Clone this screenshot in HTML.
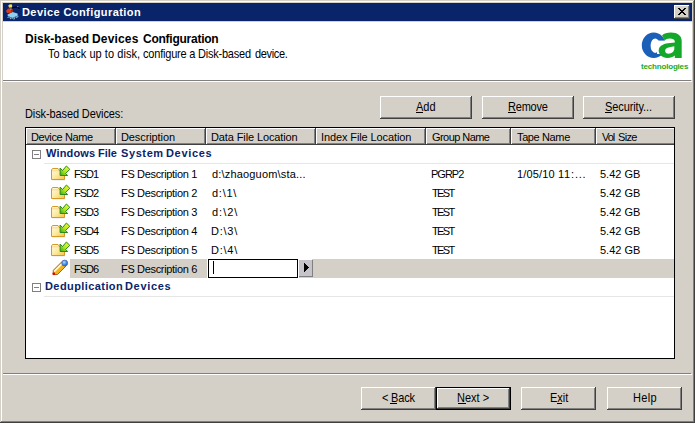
<!DOCTYPE html>
<html><head><meta charset="utf-8"><style>
html,body{margin:0;padding:0;width:695px;height:424px;overflow:hidden;background:#fff}
body{position:relative;font-family:"Liberation Sans",sans-serif}
.t{position:absolute;white-space:nowrap;}
u{text-decoration:underline;text-underline-offset:1px}
</style></head><body>
<div style="position:absolute;left:0px;top:0px;width:695px;height:424px;background:#fff;"></div>
<div style="position:absolute;left:0px;top:0px;width:695px;height:423px;background:#404040;"></div>
<div style="position:absolute;left:0px;top:0px;width:694px;height:422px;background:#d4d0c8;"></div>
<div style="position:absolute;left:1px;top:1px;width:693px;height:421px;background:#808080;"></div>
<div style="position:absolute;left:1px;top:1px;width:692px;height:420px;background:#fff;"></div>
<div style="position:absolute;left:2px;top:2px;width:691px;height:419px;background:#d4d0c8;"></div>
<div style="position:absolute;left:3px;top:3px;width:689px;height:18px;background:#0a246a;"></div>
<svg style="position:absolute;left:3px;top:3px" width="18" height="18" viewBox="0 0 18 18">
<polygon points="4.5,11.5 9.5,9 14.5,10.5 14.8,12.5 9.5,15 4.8,13" fill="#8ed0ee"/>
<polygon points="4.8,13 9.5,15 14.8,12.5 14.6,13.6 9.5,16 5,14" fill="#4a9cc8"/>
<path d="M4.5,14 L5.5,15 M6.8,15.2 L8,16 M10.5,16.2 L12,15.5 M13.2,14.8 L15.5,13.2" stroke="#b8bcc8" stroke-width="1"/>
<polygon points="3,8 5,5.5 9.5,5.8 10.3,8.5 8,9.8 4,10" fill="#e83a12"/>
<polygon points="7.5,6 9.5,5.8 10.3,8.5 8.5,9.5" fill="#a02808"/>
<polygon points="5.2,2.5 7,1.2 9,1.5 9.2,3.5 8,4.8 6,4.5" fill="#f2e040"/>
<polygon points="6.8,4 8.6,3.8 8.8,6.2 7.4,6.4" fill="#fff"/>
<path d="M7.8,4.2 L8,6.2" stroke="#000" stroke-width="0.9"/>
<path d="M8.5,5.2 L12,4 L14.5,4.2 L16.5,5.6" stroke="#000" stroke-width="1.1" fill="none"/>
<path d="M14.5,4.2 L15,3" stroke="#c0c0c0" stroke-width="0.8"/>
</svg>
<div class="t" style="left:22.00px;top:6.69px;font-size:11px;line-height:11px;font-weight:700;color:#fff;letter-spacing:0.421px">Device Configuration</div>
<div style="position:absolute;left:674px;top:5px;width:16px;height:14px;background:#404040;"></div>
<div style="position:absolute;left:674px;top:5px;width:15px;height:13px;background:#fff;"></div>
<div style="position:absolute;left:675px;top:6px;width:14px;height:12px;background:#808080;"></div>
<div style="position:absolute;left:675px;top:6px;width:13px;height:11px;background:#d4d0c8;"></div>
<svg style="position:absolute;left:678px;top:8px" width="8" height="7" viewBox="0 0 8 7" shape-rendering="crispEdges"><rect x="0" y="0" width="1" height="1"/><rect x="1" y="0" width="1" height="1"/><rect x="6" y="0" width="1" height="1"/><rect x="7" y="0" width="1" height="1"/><rect x="1" y="1" width="1" height="1"/><rect x="2" y="1" width="1" height="1"/><rect x="5" y="1" width="1" height="1"/><rect x="6" y="1" width="1" height="1"/><rect x="2" y="2" width="1" height="1"/><rect x="3" y="2" width="1" height="1"/><rect x="4" y="2" width="1" height="1"/><rect x="5" y="2" width="1" height="1"/><rect x="3" y="3" width="1" height="1"/><rect x="4" y="3" width="1" height="1"/><rect x="2" y="4" width="1" height="1"/><rect x="3" y="4" width="1" height="1"/><rect x="4" y="4" width="1" height="1"/><rect x="5" y="4" width="1" height="1"/><rect x="1" y="5" width="1" height="1"/><rect x="2" y="5" width="1" height="1"/><rect x="5" y="5" width="1" height="1"/><rect x="6" y="5" width="1" height="1"/><rect x="0" y="6" width="1" height="1"/><rect x="1" y="6" width="1" height="1"/><rect x="6" y="6" width="1" height="1"/><rect x="7" y="6" width="1" height="1"/></svg>
<div style="position:absolute;left:3px;top:22px;width:689px;height:58px;background:#fff;"></div>
<div style="position:absolute;left:3px;top:80px;width:688px;height:1px;background:#808080;"></div>
<div style="position:absolute;left:3px;top:81px;width:689px;height:1px;background:#fff;"></div>
<div class="t" style="left:25.00px;top:32.84px;font-size:12px;line-height:12px;font-weight:700;color:#000;letter-spacing:0.000px">Disk-based</div>
<div class="t" style="left:92.00px;top:32.84px;font-size:12px;line-height:12px;font-weight:700;color:#000;letter-spacing:0.167px">Devices</div>
<div class="t" style="left:143.00px;top:32.84px;font-size:12px;line-height:12px;font-weight:700;color:#000;letter-spacing:-0.250px">Configuration</div>
<div class="t" style="left:48.00px;top:48.69px;font-size:11px;line-height:11px;font-weight:400;color:#000;letter-spacing:0.056px;transform:scaleY(1.16);transform-origin:0 9.31px">To back up to disk,</div>
<div class="t" style="left:143.00px;top:48.69px;font-size:11px;line-height:11px;font-weight:400;color:#000;letter-spacing:-0.200px;transform:scaleY(1.16);transform-origin:0 9.31px">configure a</div>
<div class="t" style="left:198.00px;top:48.69px;font-size:11px;line-height:11px;font-weight:400;color:#000;letter-spacing:-0.222px;transform:scaleY(1.16);transform-origin:0 9.31px">Disk-based</div>
<div class="t" style="left:255.00px;top:48.69px;font-size:11px;line-height:11px;font-weight:400;color:#000;letter-spacing:-0.333px;transform:scaleY(1.16);transform-origin:0 9.31px">device.</div>
<svg style="position:absolute;left:640px;top:30px" width="50" height="44" viewBox="0 0 50 44">
<path fill-rule="evenodd" fill="#1a5fb8" d="M13.7,2.5 A11.9,12.7 0 1 0 13.7,27.9 A11.9,12.7 0 1 0 13.7,2.5 Z M15.2,8.45 A4.6,7.25 0 1 1 15.2,22.95 A4.6,7.25 0 1 1 15.2,8.45 Z"/>
<polygon points="17,10.6 30,10.6 30,24 17,24" fill="#fff"/>
<path fill="#14a82a" d="M22,5.5 C24,3.3 27,2.5 31,2.5 C37.5,2.5 41.7,5.5 41.7,11 L41.7,27.9 L34.8,27.9 L34.8,25.6 C33.2,27.2 30.5,27.9 27.5,27.9 C22,27.9 18.7,24.5 18.7,20.5 C18.7,16 23,13.8 28,13.2 L34.8,12.4 L34.8,11.5 C34.8,9.6 32.6,8.4 29.7,8.4 C27.5,8.4 25.6,9.3 24.7,10.6 Z M34.3,16.3 L29.5,17.2 C26.8,17.8 25.1,18.8 25.1,20.7 C25.1,22.6 26.5,23.7 28.6,23.7 C31.8,23.7 34.3,21.5 34.3,18.5 Z"/>
</svg>
<div class="t" style="left:641.00px;top:63.23px;font-size:8px;line-height:8px;font-weight:700;color:#22aa22;letter-spacing:-0.182px">technologies</div>
<div class="t" style="left:25.00px;top:108.69px;font-size:11px;line-height:11px;font-weight:400;color:#000;letter-spacing:-0.111px;transform:scaleY(1.16);transform-origin:0 9.31px">Disk-based Devices:</div>
<div style="position:absolute;left:380px;top:96px;width:92px;height:23px;background:#404040;"></div>
<div style="position:absolute;left:380px;top:96px;width:91px;height:22px;background:#fff;"></div>
<div style="position:absolute;left:381px;top:97px;width:90px;height:21px;background:#808080;"></div>
<div style="position:absolute;left:381px;top:97px;width:89px;height:20px;background:#d4d0c8;"></div>
<div class="t" style="left:416.00px;top:101.69px;font-size:11px;line-height:11px;font-weight:400;color:#000;letter-spacing:0.000px;transform:scaleY(1.16);transform-origin:0 9.31px">Add</div>
<div style="position:absolute;left:482px;top:96px;width:92px;height:23px;background:#404040;"></div>
<div style="position:absolute;left:482px;top:96px;width:91px;height:22px;background:#fff;"></div>
<div style="position:absolute;left:483px;top:97px;width:90px;height:21px;background:#808080;"></div>
<div style="position:absolute;left:483px;top:97px;width:89px;height:20px;background:#d4d0c8;"></div>
<div class="t" style="left:508.00px;top:101.69px;font-size:11px;line-height:11px;font-weight:400;color:#000;letter-spacing:-0.200px;transform:scaleY(1.16);transform-origin:0 9.31px">Remove</div>
<div style="position:absolute;left:583px;top:96px;width:92px;height:23px;background:#404040;"></div>
<div style="position:absolute;left:583px;top:96px;width:91px;height:22px;background:#fff;"></div>
<div style="position:absolute;left:584px;top:97px;width:90px;height:21px;background:#808080;"></div>
<div style="position:absolute;left:584px;top:97px;width:89px;height:20px;background:#d4d0c8;"></div>
<div class="t" style="left:605.00px;top:101.69px;font-size:11px;line-height:11px;font-weight:400;color:#000;letter-spacing:-0.100px;transform:scaleY(1.16);transform-origin:0 9.31px">Security...</div>
<div style="position:absolute;left:25px;top:127px;width:650px;height:232px;background:#000;"></div>
<div style="position:absolute;left:26px;top:128px;width:648px;height:230px;background:#fff;"></div>
<div style="position:absolute;left:26px;top:128px;width:90px;height:17px;background:#404040;"></div>
<div style="position:absolute;left:26px;top:128px;width:89px;height:16px;background:#fff;"></div>
<div style="position:absolute;left:27px;top:129px;width:88px;height:15px;background:#808080;"></div>
<div style="position:absolute;left:27px;top:129px;width:87px;height:14px;background:#d4d0c8;"></div>
<div class="t" style="left:31.00px;top:131.69px;font-size:11px;line-height:11px;font-weight:400;color:#000;letter-spacing:-0.400px">Device Name</div>
<div style="position:absolute;left:116px;top:128px;width:90px;height:17px;background:#404040;"></div>
<div style="position:absolute;left:116px;top:128px;width:89px;height:16px;background:#fff;"></div>
<div style="position:absolute;left:117px;top:129px;width:88px;height:15px;background:#808080;"></div>
<div style="position:absolute;left:117px;top:129px;width:87px;height:14px;background:#d4d0c8;"></div>
<div class="t" style="left:121.00px;top:131.69px;font-size:11px;line-height:11px;font-weight:400;color:#000;letter-spacing:-0.100px">Description</div>
<div style="position:absolute;left:206px;top:128px;width:110px;height:17px;background:#404040;"></div>
<div style="position:absolute;left:206px;top:128px;width:109px;height:16px;background:#fff;"></div>
<div style="position:absolute;left:207px;top:129px;width:108px;height:15px;background:#808080;"></div>
<div style="position:absolute;left:207px;top:129px;width:107px;height:14px;background:#d4d0c8;"></div>
<div class="t" style="left:211.00px;top:131.69px;font-size:11px;line-height:11px;font-weight:400;color:#000;letter-spacing:-0.118px">Data File Location</div>
<div style="position:absolute;left:316px;top:128px;width:110px;height:17px;background:#404040;"></div>
<div style="position:absolute;left:316px;top:128px;width:109px;height:16px;background:#fff;"></div>
<div style="position:absolute;left:317px;top:129px;width:108px;height:15px;background:#808080;"></div>
<div style="position:absolute;left:317px;top:129px;width:107px;height:14px;background:#d4d0c8;"></div>
<div class="t" style="left:321.00px;top:131.69px;font-size:11px;line-height:11px;font-weight:400;color:#000;letter-spacing:-0.111px">Index File Location</div>
<div style="position:absolute;left:426px;top:128px;width:85px;height:17px;background:#404040;"></div>
<div style="position:absolute;left:426px;top:128px;width:84px;height:16px;background:#fff;"></div>
<div style="position:absolute;left:427px;top:129px;width:83px;height:15px;background:#808080;"></div>
<div style="position:absolute;left:427px;top:129px;width:82px;height:14px;background:#d4d0c8;"></div>
<div class="t" style="left:432.00px;top:131.69px;font-size:11px;line-height:11px;font-weight:400;color:#000;letter-spacing:-0.556px">Group Name</div>
<div style="position:absolute;left:511px;top:128px;width:85px;height:17px;background:#404040;"></div>
<div style="position:absolute;left:511px;top:128px;width:84px;height:16px;background:#fff;"></div>
<div style="position:absolute;left:512px;top:129px;width:83px;height:15px;background:#808080;"></div>
<div style="position:absolute;left:512px;top:129px;width:82px;height:14px;background:#d4d0c8;"></div>
<div class="t" style="left:517.00px;top:131.69px;font-size:11px;line-height:11px;font-weight:400;color:#000;letter-spacing:-0.375px">Tape Name</div>
<div style="position:absolute;left:596px;top:128px;width:80px;height:17px;background:#404040;"></div>
<div style="position:absolute;left:596px;top:128px;width:79px;height:16px;background:#fff;"></div>
<div style="position:absolute;left:597px;top:129px;width:78px;height:15px;background:#808080;"></div>
<div style="position:absolute;left:597px;top:129px;width:77px;height:14px;background:#d4d0c8;"></div>
<div class="t" style="left:602.00px;top:131.69px;font-size:11px;line-height:11px;font-weight:400;color:#000;letter-spacing:-1.000px">Vol</div>
<div class="t" style="left:618.00px;top:131.69px;font-size:11px;line-height:11px;font-weight:400;color:#000;letter-spacing:-0.667px">Size</div>
<div style="position:absolute;left:674px;top:127px;width:1px;height:232px;background:#000;"></div>
<div style="position:absolute;left:675px;top:128px;width:2px;height:18px;background:#d4d0c8;"></div>
<div style="position:absolute;left:32px;top:150px;width:9px;height:9px;background:#808080;"></div>
<div style="position:absolute;left:33px;top:151px;width:7px;height:7px;background:#fff;"></div>
<div style="position:absolute;left:34px;top:154px;width:5px;height:1px;background:#808080;"></div>
<div class="t" style="left:46.00px;top:147.69px;font-size:11px;line-height:11px;font-weight:700;color:#0a246a;letter-spacing:0.167px">Windows</div>
<div class="t" style="left:98.00px;top:147.69px;font-size:11px;line-height:11px;font-weight:700;color:#0a246a;letter-spacing:0.000px">File</div>
<div class="t" style="left:121.00px;top:147.69px;font-size:11px;line-height:11px;font-weight:700;color:#0a246a;letter-spacing:0.600px">System</div>
<div class="t" style="left:166.00px;top:147.69px;font-size:11px;line-height:11px;font-weight:700;color:#0a246a;letter-spacing:0.667px">Devices</div>
<div style="position:absolute;left:44px;top:163px;width:630px;height:1px;background:#e6e6e6;"></div>
<svg style="position:absolute;left:49px;top:164px" width="24" height="18" viewBox="0 0 24 18">
<defs><linearGradient id="fg0" x1="0" y1="0" x2="1" y2="1"><stop offset="0" stop-color="#fffce8"/><stop offset="0.55" stop-color="#fde89a"/><stop offset="1" stop-color="#f3c440"/></linearGradient>
<linearGradient id="ag0" x1="1" y1="0" x2="0" y2="1"><stop offset="0" stop-color="#f4ff3a"/><stop offset="0.55" stop-color="#b4e61e"/><stop offset="1" stop-color="#2ea818"/></linearGradient></defs>
<path d="M3,16.5 L16,16.5 L16,8 Z" fill="#e4e6ee"/>
<path d="M2.5,15.5 L2.5,6 L3.5,4.5 L9,4.5 L10.5,6.5 L15.5,6.5 L15.5,15.5 Z" fill="url(#fg0)" stroke="#d49a28" stroke-width="1"/>
<path d="M3,6.8 L10,6.8" stroke="#f0d080" stroke-width="0.8"/>
<path d="M11.1,4 L13.5,6.5 L17.4,2 L20.8,5.3 L16.5,9.5 L18.7,11.5 L11.1,11.5 Z" fill="url(#ag0)" stroke="#2a8a1c" stroke-width="1" stroke-linejoin="miter"/>
</svg>
<div class="t" style="left:74.00px;top:168.69px;font-size:11px;line-height:11px;font-weight:400;color:#000;letter-spacing:-1.000px">FSD1</div>
<div class="t" style="left:121.00px;top:168.69px;font-size:11px;line-height:11px;font-weight:400;color:#000;letter-spacing:-0.333px">FS Description 1</div>
<div class="t" style="left:212.00px;top:168.69px;font-size:11px;line-height:11px;font-weight:400;color:#000;letter-spacing:0.176px">d:\zhaoguom\sta...</div>
<div class="t" style="left:431.00px;top:168.69px;font-size:11px;line-height:11px;font-weight:400;color:#000;letter-spacing:-1.000px">PGRP2</div>
<div class="t" style="left:517.00px;top:168.69px;font-size:11px;line-height:11px;font-weight:400;color:#000;letter-spacing:0.167px">1/05/10</div>
<div class="t" style="left:558.00px;top:168.69px;font-size:11px;line-height:11px;font-weight:400;color:#000;letter-spacing:0.800px">11:...</div>
<div class="t" style="left:600.00px;top:168.69px;font-size:11px;line-height:11px;font-weight:400;color:#000;letter-spacing:0.000px">5.42 GB</div>
<svg style="position:absolute;left:49px;top:183px" width="24" height="18" viewBox="0 0 24 18">
<defs><linearGradient id="fg1" x1="0" y1="0" x2="1" y2="1"><stop offset="0" stop-color="#fffce8"/><stop offset="0.55" stop-color="#fde89a"/><stop offset="1" stop-color="#f3c440"/></linearGradient>
<linearGradient id="ag1" x1="1" y1="0" x2="0" y2="1"><stop offset="0" stop-color="#f4ff3a"/><stop offset="0.55" stop-color="#b4e61e"/><stop offset="1" stop-color="#2ea818"/></linearGradient></defs>
<path d="M3,16.5 L16,16.5 L16,8 Z" fill="#e4e6ee"/>
<path d="M2.5,15.5 L2.5,6 L3.5,4.5 L9,4.5 L10.5,6.5 L15.5,6.5 L15.5,15.5 Z" fill="url(#fg1)" stroke="#d49a28" stroke-width="1"/>
<path d="M3,6.8 L10,6.8" stroke="#f0d080" stroke-width="0.8"/>
<path d="M11.1,4 L13.5,6.5 L17.4,2 L20.8,5.3 L16.5,9.5 L18.7,11.5 L11.1,11.5 Z" fill="url(#ag1)" stroke="#2a8a1c" stroke-width="1" stroke-linejoin="miter"/>
</svg>
<div class="t" style="left:74.00px;top:187.69px;font-size:11px;line-height:11px;font-weight:400;color:#000;letter-spacing:-1.000px">FSD2</div>
<div class="t" style="left:121.00px;top:187.69px;font-size:11px;line-height:11px;font-weight:400;color:#000;letter-spacing:-0.333px">FS Description 2</div>
<div class="t" style="left:212.00px;top:187.69px;font-size:11px;line-height:11px;font-weight:400;color:#000;letter-spacing:0.750px">d:\1\</div>
<div class="t" style="left:432.00px;top:187.69px;font-size:11px;line-height:11px;font-weight:400;color:#000;letter-spacing:-1.667px">TEST</div>
<div class="t" style="left:600.00px;top:187.69px;font-size:11px;line-height:11px;font-weight:400;color:#000;letter-spacing:0.000px">5.42 GB</div>
<svg style="position:absolute;left:49px;top:202px" width="24" height="18" viewBox="0 0 24 18">
<defs><linearGradient id="fg2" x1="0" y1="0" x2="1" y2="1"><stop offset="0" stop-color="#fffce8"/><stop offset="0.55" stop-color="#fde89a"/><stop offset="1" stop-color="#f3c440"/></linearGradient>
<linearGradient id="ag2" x1="1" y1="0" x2="0" y2="1"><stop offset="0" stop-color="#f4ff3a"/><stop offset="0.55" stop-color="#b4e61e"/><stop offset="1" stop-color="#2ea818"/></linearGradient></defs>
<path d="M3,16.5 L16,16.5 L16,8 Z" fill="#e4e6ee"/>
<path d="M2.5,15.5 L2.5,6 L3.5,4.5 L9,4.5 L10.5,6.5 L15.5,6.5 L15.5,15.5 Z" fill="url(#fg2)" stroke="#d49a28" stroke-width="1"/>
<path d="M3,6.8 L10,6.8" stroke="#f0d080" stroke-width="0.8"/>
<path d="M11.1,4 L13.5,6.5 L17.4,2 L20.8,5.3 L16.5,9.5 L18.7,11.5 L11.1,11.5 Z" fill="url(#ag2)" stroke="#2a8a1c" stroke-width="1" stroke-linejoin="miter"/>
</svg>
<div class="t" style="left:74.00px;top:206.69px;font-size:11px;line-height:11px;font-weight:400;color:#000;letter-spacing:-1.000px">FSD3</div>
<div class="t" style="left:121.00px;top:206.69px;font-size:11px;line-height:11px;font-weight:400;color:#000;letter-spacing:-0.333px">FS Description 3</div>
<div class="t" style="left:212.00px;top:206.69px;font-size:11px;line-height:11px;font-weight:400;color:#000;letter-spacing:1.000px">d:\2\</div>
<div class="t" style="left:432.00px;top:206.69px;font-size:11px;line-height:11px;font-weight:400;color:#000;letter-spacing:-1.667px">TEST</div>
<div class="t" style="left:600.00px;top:206.69px;font-size:11px;line-height:11px;font-weight:400;color:#000;letter-spacing:0.000px">5.42 GB</div>
<svg style="position:absolute;left:49px;top:221px" width="24" height="18" viewBox="0 0 24 18">
<defs><linearGradient id="fg3" x1="0" y1="0" x2="1" y2="1"><stop offset="0" stop-color="#fffce8"/><stop offset="0.55" stop-color="#fde89a"/><stop offset="1" stop-color="#f3c440"/></linearGradient>
<linearGradient id="ag3" x1="1" y1="0" x2="0" y2="1"><stop offset="0" stop-color="#f4ff3a"/><stop offset="0.55" stop-color="#b4e61e"/><stop offset="1" stop-color="#2ea818"/></linearGradient></defs>
<path d="M3,16.5 L16,16.5 L16,8 Z" fill="#e4e6ee"/>
<path d="M2.5,15.5 L2.5,6 L3.5,4.5 L9,4.5 L10.5,6.5 L15.5,6.5 L15.5,15.5 Z" fill="url(#fg3)" stroke="#d49a28" stroke-width="1"/>
<path d="M3,6.8 L10,6.8" stroke="#f0d080" stroke-width="0.8"/>
<path d="M11.1,4 L13.5,6.5 L17.4,2 L20.8,5.3 L16.5,9.5 L18.7,11.5 L11.1,11.5 Z" fill="url(#ag3)" stroke="#2a8a1c" stroke-width="1" stroke-linejoin="miter"/>
</svg>
<div class="t" style="left:74.00px;top:225.69px;font-size:11px;line-height:11px;font-weight:400;color:#000;letter-spacing:-1.000px">FSD4</div>
<div class="t" style="left:121.00px;top:225.69px;font-size:11px;line-height:11px;font-weight:400;color:#000;letter-spacing:-0.333px">FS Description 4</div>
<div class="t" style="left:211.00px;top:225.69px;font-size:11px;line-height:11px;font-weight:400;color:#000;letter-spacing:0.750px">D:\3\</div>
<div class="t" style="left:432.00px;top:225.69px;font-size:11px;line-height:11px;font-weight:400;color:#000;letter-spacing:-1.667px">TEST</div>
<div class="t" style="left:600.00px;top:225.69px;font-size:11px;line-height:11px;font-weight:400;color:#000;letter-spacing:0.000px">5.42 GB</div>
<svg style="position:absolute;left:49px;top:240px" width="24" height="18" viewBox="0 0 24 18">
<defs><linearGradient id="fg4" x1="0" y1="0" x2="1" y2="1"><stop offset="0" stop-color="#fffce8"/><stop offset="0.55" stop-color="#fde89a"/><stop offset="1" stop-color="#f3c440"/></linearGradient>
<linearGradient id="ag4" x1="1" y1="0" x2="0" y2="1"><stop offset="0" stop-color="#f4ff3a"/><stop offset="0.55" stop-color="#b4e61e"/><stop offset="1" stop-color="#2ea818"/></linearGradient></defs>
<path d="M3,16.5 L16,16.5 L16,8 Z" fill="#e4e6ee"/>
<path d="M2.5,15.5 L2.5,6 L3.5,4.5 L9,4.5 L10.5,6.5 L15.5,6.5 L15.5,15.5 Z" fill="url(#fg4)" stroke="#d49a28" stroke-width="1"/>
<path d="M3,6.8 L10,6.8" stroke="#f0d080" stroke-width="0.8"/>
<path d="M11.1,4 L13.5,6.5 L17.4,2 L20.8,5.3 L16.5,9.5 L18.7,11.5 L11.1,11.5 Z" fill="url(#ag4)" stroke="#2a8a1c" stroke-width="1" stroke-linejoin="miter"/>
</svg>
<div class="t" style="left:74.00px;top:244.69px;font-size:11px;line-height:11px;font-weight:400;color:#000;letter-spacing:-1.000px">FSD5</div>
<div class="t" style="left:121.00px;top:244.69px;font-size:11px;line-height:11px;font-weight:400;color:#000;letter-spacing:-0.333px">FS Description 5</div>
<div class="t" style="left:211.00px;top:244.69px;font-size:11px;line-height:11px;font-weight:400;color:#000;letter-spacing:0.750px">D:\4\</div>
<div class="t" style="left:432.00px;top:244.69px;font-size:11px;line-height:11px;font-weight:400;color:#000;letter-spacing:-1.667px">TEST</div>
<div class="t" style="left:600.00px;top:244.69px;font-size:11px;line-height:11px;font-weight:400;color:#000;letter-spacing:0.000px">5.42 GB</div>
<div style="position:absolute;left:70px;top:259px;width:604px;height:19px;background:#d4d0c8;"></div>
<svg style="position:absolute;left:49px;top:257px" width="24" height="22" viewBox="0 0 24 22">
<defs><radialGradient id="er" cx="0.4" cy="0.35" r="0.7"><stop offset="0" stop-color="#a8dcff"/><stop offset="0.6" stop-color="#3a8ae8"/><stop offset="1" stop-color="#2050b0"/></radialGradient></defs>
<polygon points="4.2,17.6 4.3,13.3 12.8,4.8 17,9 8.5,17.5" fill="#f2b418" stroke="#8a5a18" stroke-width="0.9"/>
<polygon points="4.8,15.5 5,13.6 13,5.6 14.2,6.8 6.2,14.8" fill="#fff8e0"/>
<rect x="3.6" y="15.6" width="2.4" height="2.2" fill="#e00000"/>
<circle cx="15.7" cy="6.1" r="3" fill="url(#er)" stroke="#5a5aa0" stroke-width="0.7"/>
</svg>
<div class="t" style="left:74.00px;top:263.69px;font-size:11px;line-height:11px;font-weight:400;color:#000;letter-spacing:-1.000px">FSD6</div>
<div class="t" style="left:121.00px;top:263.69px;font-size:11px;line-height:11px;font-weight:400;color:#000;letter-spacing:-0.333px">FS Description 6</div>
<div style="position:absolute;left:207px;top:259px;width:1px;height:19px;background:#fff;"></div>
<div style="position:absolute;left:208px;top:259px;width:90px;height:19px;background:#000;"></div>
<div style="position:absolute;left:209px;top:260px;width:88px;height:17px;background:#fff;"></div>
<div style="position:absolute;left:213px;top:261px;width:1px;height:13px;background:#000;"></div>
<div style="position:absolute;left:298px;top:259px;width:1px;height:19px;background:#fff;"></div>
<div style="position:absolute;left:298px;top:259px;width:14px;height:1px;background:#fff;"></div>
<div style="position:absolute;left:299px;top:260px;width:14px;height:17px;background:#808080;"></div>
<div style="position:absolute;left:299px;top:260px;width:13px;height:16px;background:#c6c3cb;"></div>
<svg style="position:absolute;left:304px;top:263px" width="5" height="9" viewBox="0 0 5 9" shape-rendering="crispEdges"><rect x="0" y="0" width="1" height="1"/><rect x="0" y="1" width="2" height="1"/><rect x="0" y="2" width="3" height="1"/><rect x="0" y="3" width="4" height="1"/><rect x="0" y="4" width="5" height="1"/><rect x="0" y="5" width="4" height="1"/><rect x="0" y="6" width="3" height="1"/><rect x="0" y="7" width="2" height="1"/><rect x="0" y="8" width="1" height="1"/></svg>
<div style="position:absolute;left:32px;top:283px;width:9px;height:9px;background:#808080;"></div>
<div style="position:absolute;left:33px;top:284px;width:7px;height:7px;background:#fff;"></div>
<div style="position:absolute;left:34px;top:287px;width:5px;height:1px;background:#808080;"></div>
<div class="t" style="left:45.00px;top:280.69px;font-size:11px;line-height:11px;font-weight:700;color:#0a246a;letter-spacing:0.417px">Deduplication</div>
<div class="t" style="left:125.00px;top:280.69px;font-size:11px;line-height:11px;font-weight:700;color:#0a246a;letter-spacing:0.667px">Devices</div>
<div style="position:absolute;left:44px;top:296px;width:630px;height:1px;background:#e6e6e6;"></div>
<div style="position:absolute;left:3px;top:373px;width:688px;height:1px;background:#808080;"></div>
<div style="position:absolute;left:3px;top:374px;width:689px;height:1px;background:#fff;"></div>
<div style="position:absolute;left:361px;top:387px;width:75px;height:23px;background:#404040;"></div>
<div style="position:absolute;left:361px;top:387px;width:74px;height:22px;background:#fff;"></div>
<div style="position:absolute;left:362px;top:388px;width:73px;height:21px;background:#808080;"></div>
<div style="position:absolute;left:362px;top:388px;width:72px;height:20px;background:#d4d0c8;"></div>
<div class="t" style="left:382.00px;top:392.69px;font-size:11px;line-height:11px;font-weight:400;color:#000;letter-spacing:-0.200px;transform:scaleY(1.16);transform-origin:0 9.31px">&lt; Back</div>
<div style="position:absolute;left:436px;top:387px;width:75px;height:23px;background:#000;"></div>
<div style="position:absolute;left:437px;top:388px;width:73px;height:21px;background:#404040;"></div>
<div style="position:absolute;left:437px;top:388px;width:72px;height:20px;background:#fff;"></div>
<div style="position:absolute;left:438px;top:389px;width:71px;height:19px;background:#808080;"></div>
<div style="position:absolute;left:438px;top:389px;width:70px;height:18px;background:#d4d0c8;"></div>
<div class="t" style="left:457.00px;top:392.69px;font-size:11px;line-height:11px;font-weight:400;color:#000;letter-spacing:0.000px;transform:scaleY(1.16);transform-origin:0 9.31px">Next &gt;</div>
<div style="position:absolute;left:521px;top:387px;width:75px;height:23px;background:#404040;"></div>
<div style="position:absolute;left:521px;top:387px;width:74px;height:22px;background:#fff;"></div>
<div style="position:absolute;left:522px;top:388px;width:73px;height:21px;background:#808080;"></div>
<div style="position:absolute;left:522px;top:388px;width:72px;height:20px;background:#d4d0c8;"></div>
<div class="t" style="left:550.00px;top:392.69px;font-size:11px;line-height:11px;font-weight:400;color:#000;letter-spacing:0.000px;transform:scaleY(1.16);transform-origin:0 9.31px">Exit</div>
<div style="position:absolute;left:607px;top:387px;width:75px;height:23px;background:#404040;"></div>
<div style="position:absolute;left:607px;top:387px;width:74px;height:22px;background:#fff;"></div>
<div style="position:absolute;left:608px;top:388px;width:73px;height:21px;background:#808080;"></div>
<div style="position:absolute;left:608px;top:388px;width:72px;height:20px;background:#d4d0c8;"></div>
<div class="t" style="left:633.00px;top:392.69px;font-size:11px;line-height:11px;font-weight:400;color:#000;letter-spacing:0.333px;transform:scaleY(1.16);transform-origin:0 9.31px">Help</div>
<div style="position:absolute;left:416px;top:112px;width:7px;height:1px;background:#000;"></div>
<div style="position:absolute;left:508px;top:112px;width:8px;height:1px;background:#000;"></div>
<div style="position:absolute;left:605px;top:112px;width:7px;height:1px;background:#000;"></div>
<div style="position:absolute;left:390px;top:403px;width:7px;height:1px;background:#000;"></div>
<div style="position:absolute;left:458px;top:403px;width:8px;height:1px;background:#000;"></div>
<div style="position:absolute;left:557px;top:403px;width:5px;height:1px;background:#000;"></div>
</body></html>
